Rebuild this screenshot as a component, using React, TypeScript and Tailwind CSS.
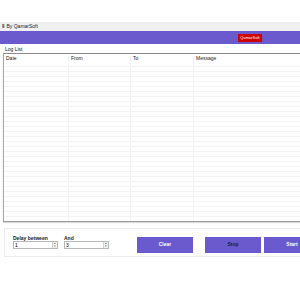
import React from "react";

const rows = Array.from({ length: 32 });

function Spin({ value }: { value: string }) {
  return (
    <div className="flex h-[8px] w-[45px] items-center border border-[#b8b8b8] bg-white">
      <span className="flex-1 pl-[1px] text-[5px] leading-none text-black">{value}</span>
      <div className="flex h-full w-[5px] flex-col border-l border-[#d0d0d0] bg-[#f3f3f3]">
        <div className="flex-1 text-center text-[3px] leading-[3px] text-[#555]">▴</div>
        <div className="flex-1 text-center text-[3px] leading-[3px] text-[#555]">▾</div>
      </div>
    </div>
  );
}

export default function App() {
  return (
    <div
      className="relative h-[300px] w-[300px] overflow-hidden bg-white"
      style={{ fontFamily: '"Liberation Sans", Arial, sans-serif' }}
    >
      <div className="h-[22px]" />
      <div className="flex h-[9px] items-center bg-[#f0f0f0] pl-[2px] text-[5px] leading-none text-[#222]">
        <span className="mr-[2px] font-bold">‖</span>
        <span>By QamarSoft</span>
      </div>
      <div className="flex h-[13px] items-center bg-[#6a5acd]">
        <div className="ml-[238px] flex h-[8px] w-[24px] items-center justify-center bg-[#d00000] text-[4px] leading-none text-white">
          QamarSoft
        </div>
      </div>
      <div className="flex h-[235px]">
        <div className="w-[3px] bg-[#6a5acd]" />
        <div className="flex flex-1 flex-col">
          <div className="ml-[3px] mt-[2px] flex flex-col">
            <div className="pl-[2px] text-[5px] leading-[6px] text-[#222]">Log List</div>
            <div className="mt-[1px] h-[169px] overflow-hidden border border-r-0 border-[#a8a8a8] border-t-[#8c8c8c] border-b-[#9a9a9a] shadow-[0_1px_1px_rgba(0,0,0,0.15)]">
              <div className="flex h-[8px] items-center text-[5px] leading-none text-[#222]">
                <div className="w-[65px] border-r border-[#ececec] pl-[2px]">Date</div>
                <div className="w-[62px] border-r border-[#ececec] pl-[2px]">From</div>
                <div className="w-[63px] border-r border-[#ececec] pl-[2px]">To</div>
                <div className="flex-1 pl-[2px]">Message</div>
              </div>
              <div className="flex flex-col">
                {rows.map((_, i) => (
                  <div key={i} className="flex h-[5px] border-b border-[#f4f4f4]">
                    <div className="w-[65px] border-r border-[#f2f2f2]" />
                    <div className="w-[62px] border-r border-[#f2f2f2]" />
                    <div className="w-[63px] border-r border-[#f2f2f2]" />
                    <div className="flex-1" />
                  </div>
                ))}
              </div>
            </div>
          </div>
          <div className="ml-[4px] mt-[6px] flex h-[29px] items-start border border-r-0 border-[#ececec] pt-[8px]">
            <div className="-mt-[2px] ml-[8px] flex flex-col">
              <span className="text-[5px] font-bold leading-[6px] text-[#222]">Delay between</span>
              <Spin value="1" />
            </div>
            <div className="-mt-[2px] ml-[6px] flex flex-col">
              <span className="text-[5px] font-bold leading-[6px] text-[#222]">And</span>
              <Spin value="3" />
            </div>
            <div className="ml-[28px] flex h-[16px] w-[56px] items-center justify-center bg-[#6a5acd] text-[5px] font-bold text-white">
              Clear
            </div>
            <div className="ml-[12px] flex h-[16px] w-[56px] items-center justify-center bg-[#6a5acd] text-[5px] font-bold text-[#1a1a3a]">
              Stop
            </div>
            <div className="ml-[3px] flex h-[16px] w-[56px] shrink-0 items-center justify-center bg-[#6a5acd] text-[5px] font-bold text-white">
              Start
            </div>
          </div>
        </div>
      </div>
    </div>
  );
}
